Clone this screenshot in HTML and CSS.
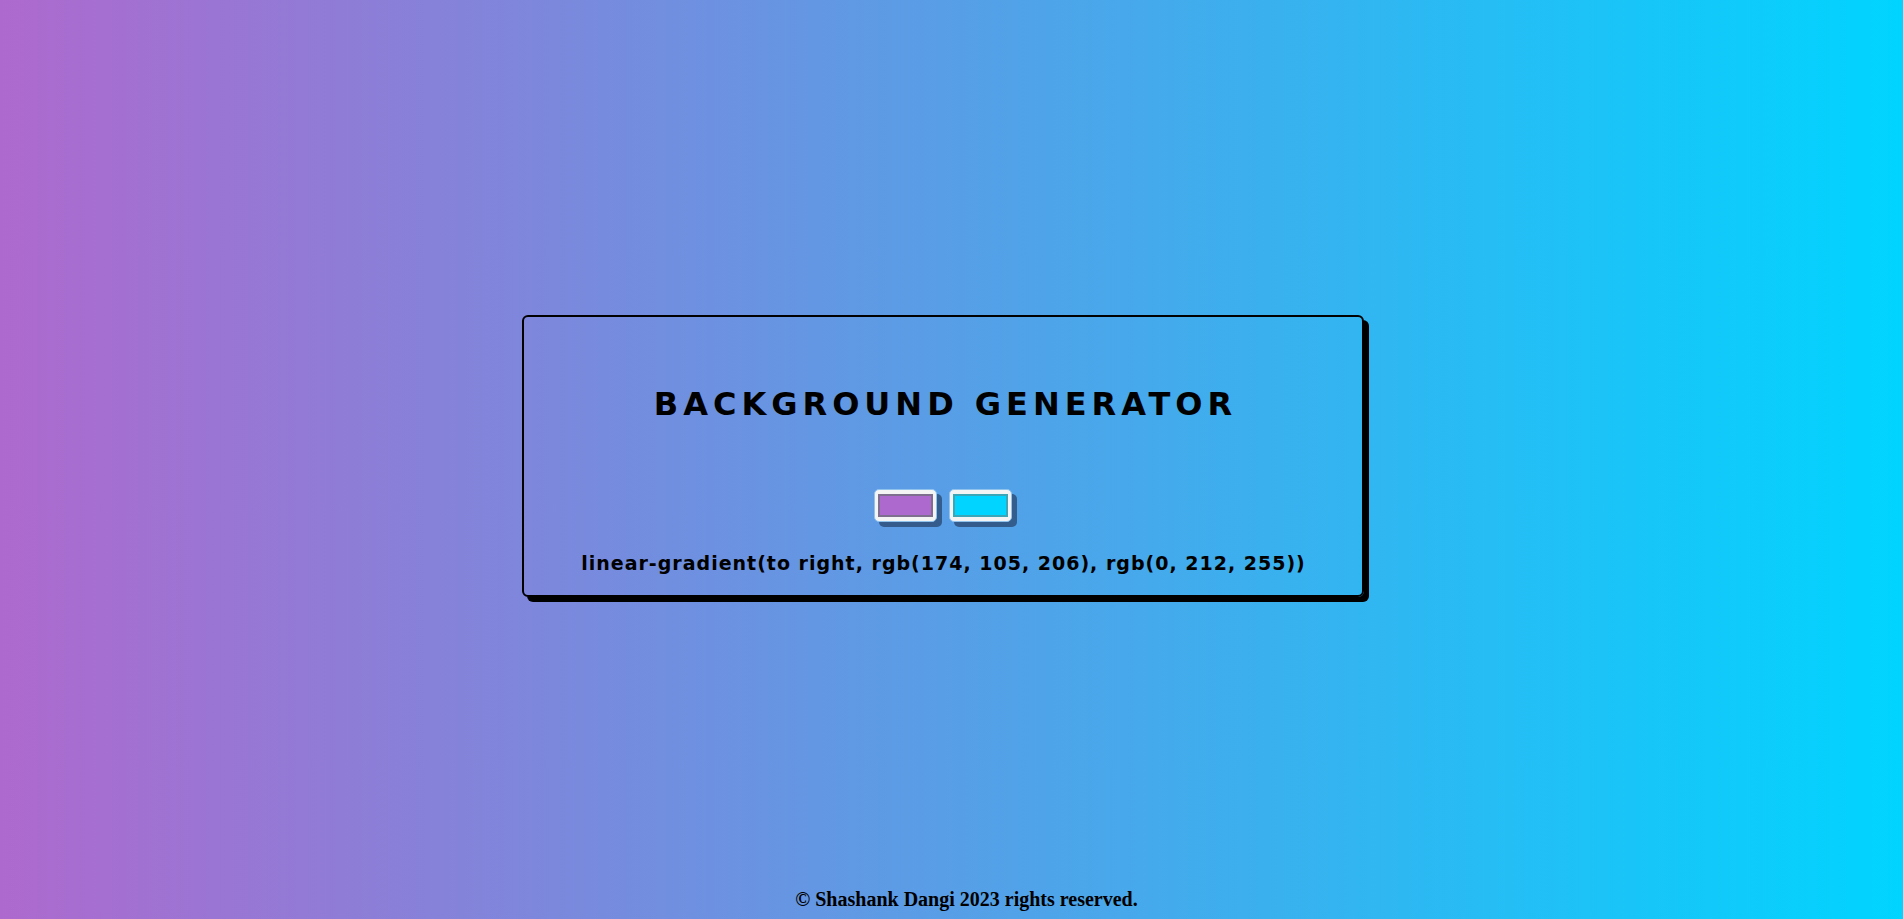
FILE: index.html
```html
<!DOCTYPE html>
<html lang="en">
<head>
<meta charset="utf-8">
<title>Background Generator</title>
<link rel="stylesheet" href="styles.css">
</head>
<body class="page">
  <main class="stage">
    <section class="card">
      <h1 class="title">BACKGROUND GENERATOR</h1>
      <div class="pickers">
        <div class="picker"><span class="swatch swatch-purple"></span></div>
        <div class="picker"><span class="swatch swatch-cyan"></span></div>
      </div>
      <h3 class="css-text">linear-gradient(to right, rgb(174, 105, 206), rgb(0, 212, 255))</h3>
    </section>
  </main>
  <footer class="footer">© Shashank Dangi 2023 rights reserved.</footer>
</body>
</html>
```
FILE: styles.css
```css
html, body {
  margin: 0;
  padding: 0;
}
.page {
  min-height: 100vh;
  display: flex;
  flex-direction: column;
  background: linear-gradient(to right, rgb(174, 105, 206), rgb(0, 212, 255));
  font-family: "DejaVu Sans", "Liberation Sans", sans-serif;
  color: #000;
}
.stage {
  flex: 1;
  display: flex;
  align-items: center;
  justify-content: center;
  padding-top: 23px;
  padding-right: 17px;
}
.card {
  width: 838px;
  height: 278px;
  border: 2px solid #000;
  border-radius: 6px;
  box-shadow: 5px 5px 0 #000;
  display: flex;
  flex-direction: column;
  align-items: center;
  box-sizing: content-box;
}
.title {
  margin: 69px -5px 0 0;
  font-size: 32px;
  line-height: 36px;
  font-weight: 700;
  letter-spacing: 5px;
}
.pickers {
  display: flex;
  gap: 12px;
  margin-top: 67px;
}
.picker {
  width: 55px;
  height: 23px;
  padding: 4px 3px;
  background: #f4f4f4;
  border: 1px solid #8fc3ee;
  border-radius: 5px;
  box-shadow: 5px 5px 0 rgba(40, 70, 110, 0.75);
  display: flex;
}
.swatch {
  flex: 1;
  border: 2px solid #888;
}
.swatch-purple { background: rgb(174, 105, 206); border-color: #7f6f8f; }
.swatch-cyan { background: rgb(0, 212, 255); border-color: #3aa6b8; }
.css-text {
  margin: 29px -1px 0 0;
  font-size: 19px;
  line-height: 24px;
  font-weight: 700;
  letter-spacing: 1px;
}
.footer {
  text-align: center;
  font-family: "Liberation Serif", serif;
  font-weight: 700;
  font-size: 20px;
  line-height: 22px;
  padding: 0 0 9px 30px;
}
```
